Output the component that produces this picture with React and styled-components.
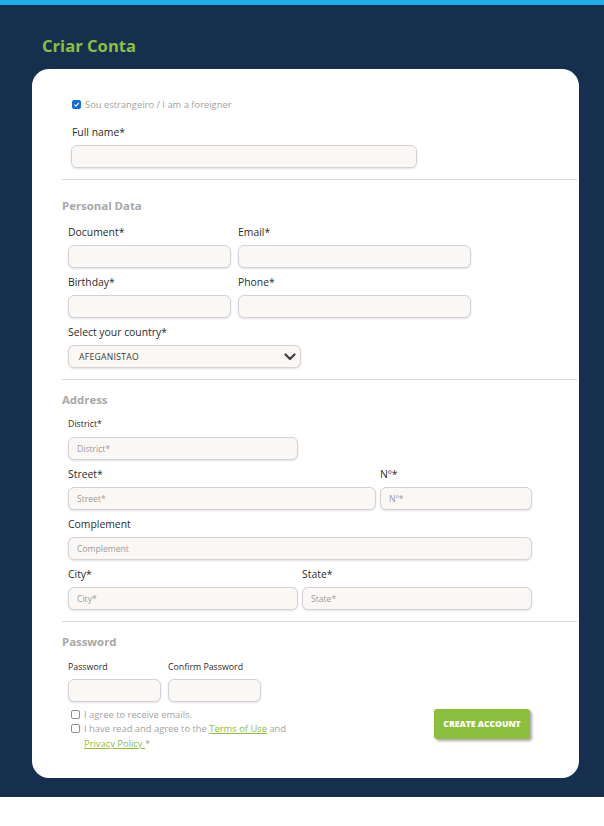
import React from "react";
import styled, { createGlobalStyle } from "styled-components";

const Global = createGlobalStyle`
  html, body { margin: 0; padding: 0; background: #ffffff; }
  body { font-family: "Open Sans", "Noto Sans", Arial, sans-serif; }
  * { box-sizing: border-box; }
`;

const Page = styled.div`
  background: #172f4f;
  border-top: 5px solid #1eaee4;
  padding: 31px 25px 19px 32px;
`;

const Title = styled.h1`
  margin: 0 0 13px 10px;
  font-size: 16.6px;
  line-height: 20px;
  font-weight: 700;
  color: #8cc03f;
`;

const Card = styled.div`
  background: #ffffff;
  border-radius: 17px;
  padding: 29px 2px 27px 30px;
`;

const Indent = styled.div`
  padding-left: ${(p) => p.$left || 0}px;
  margin-top: ${(p) => p.$mt || 0}px;
`;

const CheckRow = styled.label`
  display: flex;
  align-items: ${(p) => (p.$top ? "flex-start" : "center")};
  gap: 4px;
  font-size: 9.4px;
  line-height: ${(p) => p.$lh || 13}px;
  color: #a3a3a3;
  width: ${(p) => p.$width || "auto"};
`;

const Box = styled.span`
  flex: 0 0 auto;
  width: 9px;
  height: 9px;
  margin-top: ${(p) => p.$mt || 0}px;
  border-radius: 2px;
  border: 1px solid ${(p) => (p.$checked ? "#0b6fe0" : "#8f8f8f")};
  background: ${(p) => (p.$checked ? "#0b6fe0" : "#ffffff")};
  display: flex;
  align-items: center;
  justify-content: center;
`;

const Label = styled.div`
  font-size: ${(p) => p.$size || 10.4}px;
  line-height: 14px;
  color: #2c2c2c;
  margin-bottom: ${(p) => p.$mb ?? 6}px;
  white-space: nowrap;
`;

const Input = styled.div`
  height: 23px;
  width: ${(p) => (p.$w ? `${p.$w}px` : "100%")};
  background: #fbf7f4;
  border: 1px solid #d3d3d6;
  border-radius: 6px;
  box-shadow: 0 1px 2px rgba(0, 0, 0, 0.12);
  display: flex;
  align-items: center;
  padding: 0 8px;
  font-size: 8.6px;
  color: #9a9a9a;
`;

const Select = styled(Input)`
  justify-content: space-between;
  padding: 0 4px 0 10px;
  color: #3a3a3a;
  font-size: 8.6px;
  letter-spacing: 0.3px;
`;

const Divider = styled.hr`
  border: 0;
  border-top: 1px solid #d9d9d9;
  margin: ${(p) => p.$m || "11px 0 0 0"};
`;

const SectionTitle = styled.div`
  font-size: 11.4px;
  line-height: 13px;
  font-weight: 700;
  color: #a8a8a8;
  margin: ${(p) => p.$m};
`;

const Grid = styled.div`
  display: grid;
  grid-template-columns: ${(p) => p.$cols};
  column-gap: ${(p) => p.$gap || 7}px;
  padding-left: 6px;
`;

const Field = styled.div`
  margin-bottom: ${(p) => p.$mb ?? 7}px;
  grid-column: ${(p) => p.$span || "auto"};
`;

const BottomRow = styled.div`
  display: flex;
  justify-content: space-between;
  align-items: flex-start;
  padding: 0 47px 0 9px;
`;

const Checks = styled.div`
  display: flex;
  flex-direction: column;
  padding-top: 6px;
`;

const Link = styled.span`
  color: #8dbf3f;
  text-decoration: underline;
`;

const Button = styled.button`
  margin-top: 7px;
  width: 96px;
  height: 30px;
  border: 0;
  border-radius: 3px;
  background: #8dbf3f;
  color: #ffffff;
  font-family: inherit;
  font-weight: 800;
  font-size: 8.6px;
  letter-spacing: 0;
  padding: 0;
  box-shadow: 2px 2px 3px rgba(0, 0, 0, 0.35);
`;

const Tick = () => (
  <svg width="7" height="7" viewBox="0 0 10 10">
    <path d="M2 5.2 L4.2 7.4 L8.2 2.6" fill="none" stroke="#fff" strokeWidth="1.8" />
  </svg>
);

const Chevron = () => (
  <svg width="12" height="8" viewBox="0 0 12 8">
    <path d="M1.5 1.5 L6 6 L10.5 1.5" fill="none" stroke="#3d3d3d" strokeWidth="2.2" strokeLinecap="round" strokeLinejoin="round" />
  </svg>
);

export default function App() {
  return (
    <>
      <Global />
      <Page>
        <Title>Criar Conta</Title>
        <Card>
          <Indent $left={10}>
            <CheckRow>
              <Box $checked>
                <Tick />
              </Box>
              <span>Sou estrangeiro / I am a foreigner</span>
            </CheckRow>
            <Indent $mt={14}>
              <Label>Full name*</Label>
              <Input $w={346} style={{ marginLeft: -1 }} />
            </Indent>
          </Indent>

          <Divider $m="11px 0 0 0" />
          <SectionTitle $m="19px 0 13px 0">Personal Data</SectionTitle>
          <Grid $cols="163px 233px">
            <Field>
              <Label>Document*</Label>
              <Input />
            </Field>
            <Field>
              <Label>Email*</Label>
              <Input />
            </Field>
            <Field>
              <Label>Birthday*</Label>
              <Input />
            </Field>
            <Field>
              <Label>Phone*</Label>
              <Input />
            </Field>
            <Field $span="1 / 3" $mb={0}>
              <Label>Select your country*</Label>
              <Select $w={233}>
                <span>AFEGANISTAO</span>
                <Chevron />
              </Select>
            </Field>
          </Grid>

          <Divider $m="11px 0 0 0" />
          <SectionTitle $m="13px 0 11px 0">Address</SectionTitle>
          <Grid $cols="308px 152px" $gap={4}>
            <Field $span="1 / 3">
              <Label $size={8.8}>District*</Label>
              <Input $w={230}>District*</Input>
            </Field>
            <Field>
              <Label>Street*</Label>
              <Input>Street*</Input>
            </Field>
            <Field>
              <Label>Nº*</Label>
              <Input>Nº*</Input>
            </Field>
            <Field $span="1 / 3">
              <Label>Complement</Label>
              <Input>Complement</Input>
            </Field>
          </Grid>
          <Grid $cols="230px 230px" $gap={4}>
            <Field $mb={0}>
              <Label>City*</Label>
              <Input>City*</Input>
            </Field>
            <Field $mb={0}>
              <Label>State*</Label>
              <Input>State*</Input>
            </Field>
          </Grid>

          <Divider $m="11px 0 0 0" />
          <SectionTitle $m="13px 0 12px 0">Password</SectionTitle>
          <Grid $cols="93px 93px">
            <Field $mb={0}>
              <Label $size={8.8} $mb={5}>Password</Label>
              <Input />
            </Field>
            <Field $mb={0}>
              <Label $size={8.8} $mb={5}>Confirm Password</Label>
              <Input />
            </Field>
          </Grid>

          <BottomRow>
            <Checks>
              <CheckRow $lh={13}>
                <Box />
                <span>I agree to receive emails.</span>
              </CheckRow>
              <CheckRow $top $lh={15} $width="232px">
                <Box $mt={3} />
                <span>
                  I have read and agree to the <Link>Terms of Use</Link> and{" "}
                  <Link>Privacy Policy </Link>*
                </span>
              </CheckRow>
            </Checks>
            <Button>CREATE ACCOUNT</Button>
          </BottomRow>
        </Card>
      </Page>
    </>
  );
}
